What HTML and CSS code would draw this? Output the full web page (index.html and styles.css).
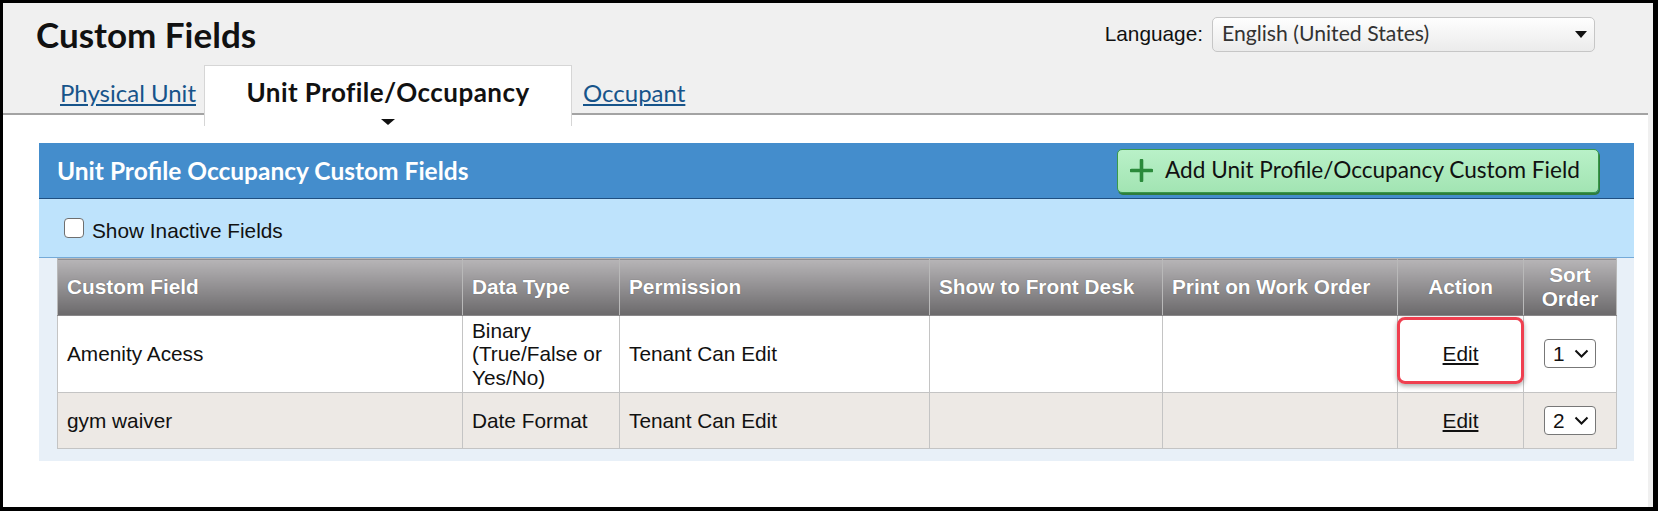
FILE: index.html
```html
<!DOCTYPE html>
<html lang="en">
<head>
<meta charset="utf-8">
<title>Custom Fields</title>
<link rel="stylesheet" href="styles.css">
</head>
<body>
<div class="frame">
  <div class="page">
    <header class="top">
      <div class="title-row">
        <h1 class="title">Custom Fields</h1>
        <div class="lang">
          <span class="lang-label">Language:</span>
          <div class="lang-select">
            <span>English (United States)</span>
            <svg class="lang-arrow" width="12" height="7" viewBox="0 0 12 7"><path d="M0 0H12L6 7Z" fill="#111"/></svg>
          </div>
        </div>
      </div>
      <nav class="tabs">
        <a class="tab" href="#">Physical Unit</a>
        <div class="tab-active">Unit Profile/Occupancy</div>
        <a class="tab" href="#">Occupant</a>
      </nav>
    </header>
    <main class="content">
      <section class="panel">
        <div class="panel-head">
          <h2 class="panel-title">Unit Profile Occupancy Custom Fields</h2>
          <button class="add-btn" type="button">
            <svg class="plus" width="23" height="23" viewBox="0 0 23 23"><path d="M11.5 1.5V21.5M1.5 11.5H21.5" stroke="#2b8a3b" stroke-width="3.6" stroke-linecap="round"/></svg>
            <span>Add Unit Profile/Occupancy Custom Field</span>
          </button>
        </div>
        <div class="filter">
          <label class="check-label"><input class="check" type="checkbox"><span class="check-text">Show Inactive Fields</span></label>
        </div>
        <div class="table-wrap">
          <table class="grid">
            <colgroup>
              <col class="c1"><col class="c2"><col class="c3"><col class="c4"><col class="c5"><col class="c6"><col class="c7">
            </colgroup>
            <thead>
              <tr>
                <th>Custom Field</th>
                <th>Data Type</th>
                <th>Permission</th>
                <th>Show to Front Desk</th>
                <th>Print on Work Order</th>
                <th class="center">Action</th>
                <th class="center">Sort Order</th>
              </tr>
            </thead>
            <tbody>
              <tr class="r1">
                <td>Amenity Acess</td>
                <td>Binary (True/False or Yes/No)</td>
                <td>Tenant Can Edit</td>
                <td></td>
                <td></td>
                <td class="center hl"><a class="edit" href="#">Edit</a></td>
                <td class="center"><div class="sort"><span>1</span><svg width="15" height="9" viewBox="0 0 15 9"><path d="M1.5 1.5L7.5 7.5L13.5 1.5" fill="none" stroke="#111" stroke-width="2"/></svg></div></td>
              </tr>
              <tr class="r2">
                <td>gym waiver</td>
                <td>Date Format</td>
                <td>Tenant Can Edit</td>
                <td></td>
                <td></td>
                <td class="center"><a class="edit" href="#">Edit</a></td>
                <td class="center"><div class="sort"><span>2</span><svg width="15" height="9" viewBox="0 0 15 9"><path d="M1.5 1.5L7.5 7.5L13.5 1.5" fill="none" stroke="#111" stroke-width="2"/></svg></div></td>
              </tr>
            </tbody>
          </table>
        </div>
      </section>
    </main>
  </div>
</div>
</body>
</html>
```
FILE: styles.css
```css
html, body {
  margin: 0;
  padding: 0;
}

body {
  background: #000;
  font-family: "Liberation Sans", Arial, sans-serif;
  font-size: 20.8px;
  color: #111;
}

.frame {
  box-sizing: border-box;
  height: 511px;
  padding: 3px 5px 4px 3px;
}

.page {
  box-sizing: border-box;
  height: 100%;
  background: #fff;
  border-right: 5px solid #f0f0f0;
  overflow: hidden;
}

/* ---------- top header ---------- */
.top {
  background: #f0f0f0;
  border-bottom: 2px solid #a3a3a3;
}

.title-row {
  display: flex;
  align-items: center;
  justify-content: space-between;
  height: 62px;
  padding: 0 53px 0 33px;
}

.title {
  margin: 0;
  font: 700 35px/1.2 Lato, sans-serif;
  color: #111;
}

.lang {
  display: flex;
  align-items: center;
  gap: 9px;
}

.lang-label {
  font-size: 20.8px;
  color: #111;
}

.lang-select {
  box-sizing: border-box;
  width: 383px;
  height: 35px;
  border: 1px solid #c6c6c6;
  border-radius: 5px;
  background: linear-gradient(#fefefe, #ebebeb);
  display: flex;
  align-items: center;
  justify-content: space-between;
  padding: 0 7px 0 9px;
  font: 400 21.2px/1 Lato, sans-serif;
  color: #333;
}

.tabs {
  display: flex;
  align-items: flex-end;
  height: 48px;
  padding-left: 57px;
}

.tab {
  font: 400 24px/1.2 Lato, sans-serif;
  color: #17548a;
  text-decoration: underline;
  text-underline-offset: 2px;
  padding-bottom: 5px;
}

.tab-active {
  position: relative;
  z-index: 1;
  box-sizing: border-box;
  width: 368px;
  height: 61px;
  margin: 0 11px -13px 8px;
  border: 1px solid #d6d6d6;
  border-bottom: none;
  background: #fff;
  padding-top: 11px;
  display: flex;
  flex-direction: column;
  align-items: center;
  font: 700 26px/1.2 Lato, sans-serif;
  letter-spacing: 0.45px;
  color: #111;
}

.tab-active::after {
  content: "";
  margin-top: auto;
  margin-bottom: 1px;
  border-left: 7px solid transparent;
  border-right: 7px solid transparent;
  border-top: 6px solid #111;
}

/* ---------- content ---------- */
.content {
  padding: 28px 14px 0 36px;
}

.panel {
  background: #e8f0f8;
  padding-bottom: 12px;
}

.panel-head {
  height: 55px;
  background: #448dcc;
  border-bottom: 1px solid #1f4f80;
  display: flex;
  align-items: center;
  justify-content: space-between;
  padding: 0 35px 0 18px;
}

.panel-title {
  margin: 0;
  font: 700 24.5px/1.2 Lato, sans-serif;
  color: #fff;
}

.add-btn {
  box-sizing: border-box;
  width: 482px;
  height: 44px;
  border: 1px solid #3a994a;
  border-radius: 5px;
  background: linear-gradient(#b9f1c8, #a2e4b3);
  box-shadow: 1px 2px 0 #2f7d3c;
  display: flex;
  align-items: center;
  gap: 12px;
  padding: 0 0 0 12px;
  font: 400 22.6px/1 Lato, sans-serif;
  color: #111;
  cursor: pointer;
}

.plus {
  flex: none;
}

.filter {
  height: 58px;
  background: #bee3fc;
  border-bottom: 1px solid #74aad8;
  display: flex;
  align-items: center;
  padding-left: 25px;
}

.check-label {
  display: flex;
  align-items: center;
  gap: 8px;
  font-size: 20.8px;
  color: #111;
}

.check-text {
  padding-top: 6px;
}

.check {
  appearance: none;
  -webkit-appearance: none;
  box-sizing: border-box;
  width: 20px;
  height: 20px;
  margin: 0;
  border: 1.5px solid #6f6f6f;
  border-radius: 4px;
  background: #fff;
}

.table-wrap {
  padding: 0 18px;
}

.grid {
  width: 100%;
  border-collapse: collapse;
  table-layout: fixed;
  font-size: 20.8px;
}

.c1 { width: 405px; }
.c2 { width: 157px; }
.c3 { width: 310px; }
.c4 { width: 233px; }
.c5 { width: 235px; }
.c6 { width: 126px; }
.c7 { width: 93px; }

.grid th {
  height: 57px;
  box-sizing: border-box;
  padding: 0 9px;
  background: linear-gradient(#b7b5b7, #6b696b);
  border: 1px solid #b9b9b9;
  border-bottom-color: #8a888a;
  color: #fff;
  font-weight: 700;
  line-height: 24px;
  text-align: left;
  text-shadow: 0 0 1px rgba(0, 0, 0, 0.45);
}

.grid td {
  padding: 3px 9px;
  border: 1px solid #c4c4c4;
  line-height: 23.3px;
  color: #111;
  vertical-align: middle;
}

.grid tr.r1 td {
  background: #fff;
}

.grid tr.r2 {
  height: 56px;
}

.grid tr.r2 td {
  background: #ede9e5;
}

.grid .center {
  text-align: center;
}

.hl {
  position: relative;
}

.hl::before {
  content: "";
  position: absolute;
  left: -1px;
  right: -1px;
  top: 1px;
  bottom: 8px;
  border: 3px solid #ef3f4f;
  border-radius: 8px;
  box-shadow: 0 2px 5px rgba(0, 0, 0, 0.35);
}

.edit {
  position: relative;
  color: #111;
  text-decoration: underline;
}

.sort {
  box-sizing: border-box;
  display: inline-flex;
  align-items: center;
  justify-content: space-between;
  width: 52px;
  height: 29px;
  padding: 0 6px 0 8px;
  border: 1px solid #777;
  border-radius: 4px;
  background: #fff;
  font-size: 20.8px;
  vertical-align: middle;
}
```
